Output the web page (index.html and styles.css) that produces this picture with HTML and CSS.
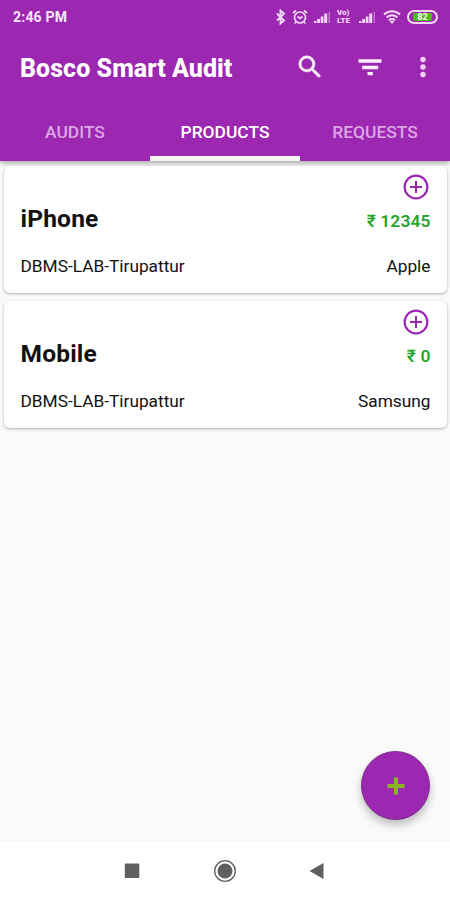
FILE: index.html
```html
<!DOCTYPE html>
<html lang="en">
<head>
  <meta charset="UTF-8">
  <meta name="viewport" content="width=device-width, initial-scale=1.0">
  <title>Bosco Smart Audit</title>
  <link rel="stylesheet" href="styles.css">
</head>
<body>

  <header class="header">
    <!-- Status bar -->
    <div class="status-bar">
      <span class="time">2:46 PM</span>
      <div class="status-icons">
        <svg width="10" height="16" viewBox="0 0 10 16"><path d="M1 4.5l7 7-3.5 3V1.5L8 4.5l-7 7" fill="none" stroke="#f1d6f5" stroke-width="1.9"/></svg>
        <svg width="16" height="16" viewBox="0 0 16 16" fill="none" stroke="#f1d6f5" stroke-width="1.7"><circle cx="8" cy="8.5" r="5.5"/><path d="M1 4l3-2.500M15 4l-3-2.500M5.500 7.500L8 9.500l2.500-2M4 13l-1.500 1.500M12 13l1.500 1.500"/></svg>
        <svg width="17" height="16" viewBox="0 0 17 16"><path d="M0 14v-2h2.500v2zM3.200 14v-4H6v4zM6.700 14V7.500h2.800v6.500zM10.200 14V4.500h3v9.500z" fill="#f1d6f5"/><path d="M14.500 14V3h1.500v11z" fill="#c476d0"/></svg>
        <span class="volte"><span>Vo)</span><span>LTE</span></span>
        <svg width="17" height="16" viewBox="0 0 17 16"><path d="M0 14v-2h2.500v2zM3.200 14v-4H6v4zM6.700 14V7.500h2.800v6.500zM10.200 14V4.500h3v9.500z" fill="#f1d6f5"/><path d="M14.500 14V3h1.500v11z" fill="#c476d0"/></svg>
        <svg class="wifi" width="18" height="16" viewBox="0 0 18 16" fill="none" stroke="#f1d6f5" stroke-width="2"><path d="M1 5.500c4.600-4.400 11.400-4.400 16 0M3.600 8.500c3.100-2.900 7.700-2.900 10.800 0M6 11.300c1.700-1.600 4.300-1.600 6 0"/><path d="M9 15l-2.500-3h5z" fill="#f1d6f5" stroke="none"/></svg>
        <span class="battery"><span class="battery-level">82</span></span>
      </div>
    </div>

    <!-- Toolbar -->
    <div class="toolbar">
      <h1>Bosco Smart Audit</h1>
      <div class="actions">
        <svg width="30" height="30" viewBox="0 0 24 24" fill="#fbeffc" stroke="#fbeffc" stroke-width=".4"><path d="M15.500 14h-.79l-.28-.27A6.471 6.471 0 0 0 16 9.500 6.500 6.500 0 1 0 9.500 16c1.610 0 3.090-.59 4.230-1.570l.27.28v.79l5 4.990L20.490 19l-4.990-5zm-6 0C7.010 14 5 11.990 5 9.500S7.010 5 9.500 5 14 7.010 14 9.500 11.990 14 9.500 14z"/></svg>
        <svg width="30" height="30" viewBox="0 0 30 30" fill="#fbeffc"><path d="M3.500 7.300h23v3.400h-23zM7.200 13.800h16v3.400h-16zM12.500 20h5.400v3.300h-5.400z"/></svg>
        <svg class="more" width="8" height="30" viewBox="0 0 8 30" fill="#f0d3f4"><circle cx="4" cy="7.500" r="2.700"/><circle cx="4" cy="15" r="2.700"/><circle cx="4" cy="22.500" r="2.700"/></svg>
      </div>
    </div>

    <!-- Tabs -->
    <nav class="tabs">
      <a class="tab">AUDITS</a>
      <a class="tab active">PRODUCTS</a>
      <a class="tab">REQUESTS</a>
    </nav>
  </header>

  <!-- Products -->
  <main class="products">
    <div class="card">
      <svg class="add" width="26" height="26" viewBox="0 0 26 26" fill="none" stroke="#9c27b0"><circle cx="13" cy="13" r="11.400" stroke-width="2.200"/><path d="M7 13h12M13 7v12" stroke-width="2"/></svg>
      <div class="row">
        <h2>iPhone</h2>
        <span class="price">₹ 12345</span>
      </div>
      <div class="row details">
        <span>DBMS-LAB-Tirupattur</span>
        <span>Apple</span>
      </div>
    </div>
    <div class="card">
      <svg class="add" width="26" height="26" viewBox="0 0 26 26" fill="none" stroke="#9c27b0"><circle cx="13" cy="13" r="11.400" stroke-width="2.200"/><path d="M7 13h12M13 7v12" stroke-width="2"/></svg>
      <div class="row">
        <h2>Mobile</h2>
        <span class="price">₹ 0</span>
      </div>
      <div class="row details">
        <span>DBMS-LAB-Tirupattur</span>
        <span>Samsung</span>
      </div>
    </div>
  </main>

  <button class="fab" aria-label="Add product">
    <svg width="18" height="18" viewBox="0 0 18 18"><path d="M.5 9h17M9 .5v17" stroke="#8bb51f" stroke-width="4"/></svg>
  </button>

  <!-- Navigation bar -->
  <footer class="nav-bar">
    <svg width="24" height="24" viewBox="0 0 24 24"><path d="M4.800 4.500h14.500V19H4.800z" fill="#606060"/></svg>
    <svg width="24" height="24" viewBox="0 0 24 24"><circle cx="12" cy="12" r="10.300" fill="none" stroke="#606060" stroke-width="1.300"/><circle cx="12" cy="12" r="7.500" fill="#606060"/></svg>
    <svg width="24" height="24" viewBox="0 0 24 24"><path d="M3.500 12l14-8v16z" fill="#606060"/></svg>
  </footer>

</body>
</html>
```

FILE: styles.css
```css
* {
  box-sizing: border-box;
}
body {
  display: flex;
  flex-direction: column;
  height: 900px;
  margin: 0;
  font-family: Roboto, "Noto Sans", sans-serif;
  background-color: #fafafa;
  color: #111;
}
svg {
  display: block;
  flex: none;
}
.header {
  height: 161px;
  background-color: #9c27b0;
  color: #fff;
  box-shadow: 0 2px 5px rgba(0, 0, 0, 0.35);
}
.status-bar {
  display: flex;
  align-items: center;
  justify-content: space-between;
  height: 33px;
  padding: 0 12px 0 13px;
}
.time {
  font-size: 14px;
  font-weight: bold;
  letter-spacing: 0.2px;
  color: #f8e6fa;
}
.status-icons {
  display: flex;
  align-items: center;
  gap: 6px;
}
.volte {
  display: flex;
  flex-direction: column;
  width: 16px;
  font-size: 8px;
  font-weight: 900;
  line-height: 8px;
  color: #f1d6f5;
}
.wifi {
  margin-left: 1px;
}
.battery {
  width: 31px;
  height: 14px;
  padding: 1px 4px;
  border: 2px solid #f1d6f5;
  border-radius: 7px;
}
.battery-level {
  display: block;
  height: 8px;
  border-radius: 2px;
  background: #4cbb17;
  font-size: 9px;
  font-weight: bold;
  line-height: 8px;
  text-align: center;
}
.toolbar {
  display: flex;
  align-items: center;
  justify-content: space-between;
  height: 70px;
  padding: 0 23px 0 20px;
}
h1 {
  margin: 0;
  font-size: 25px;
  font-weight: 800;
  letter-spacing: 0.05px;
}
.actions {
  display: flex;
  gap: 30px;
  padding-bottom: 3px;
}
.more {
  margin-left: 4px;
}
.tabs {
  display: grid;
  grid-template-columns: repeat(3, 1fr);
  height: 58px;
}
.tab {
  height: 58px;
  padding-top: 1px;
  border-bottom: 5px solid transparent;
  font-size: 17.4px;
  font-weight: 500;
  line-height: 57px;
  text-align: center;
  color: #dca6e4;
}
.tab.active {
  color: #fff;
  border-color: #f5f5f5;
}
.products {
  display: flex;
  flex: 1;
  flex-direction: column;
  gap: 8px;
  padding: 5px 3px 0 4px;
}
.card {
  height: 127px;
  padding: 8px 16.5px 0 16.5px;
  border-radius: 6px;
  background: #fff;
  box-shadow: 0 1px 3px rgba(0, 0, 0, 0.3);
}
.add {
  margin-left: auto;
  margin-right: 2px;
}
.row {
  display: flex;
  align-items: center;
  justify-content: space-between;
  height: 38px;
}
h2 {
  margin: 0;
  padding-bottom: 1px;
  font-size: 24.5px;
  font-weight: bold;
  letter-spacing: 0.2px;
}
.price {
  padding-top: 4px;
  font-size: 17.4px;
  font-weight: 600;
  letter-spacing: 0.1px;
  color: #27a52b;
}
.details {
  height: 55px;
  font-size: 17.3px;
}
.fab {
  position: absolute;
  left: 361px;
  top: 751px;
  display: flex;
  align-items: center;
  justify-content: center;
  width: 69px;
  height: 69px;
  padding: 0;
  border: 1px solid #7c2a90;
  border-radius: 50%;
  background: #9c27b0;
  box-shadow: 0 5px 9px rgba(0, 0, 0, 0.25);
}
.nav-bar {
  display: flex;
  align-items: center;
  justify-content: center;
  gap: 69px;
  height: 58px;
  background: #fff;
}
```
